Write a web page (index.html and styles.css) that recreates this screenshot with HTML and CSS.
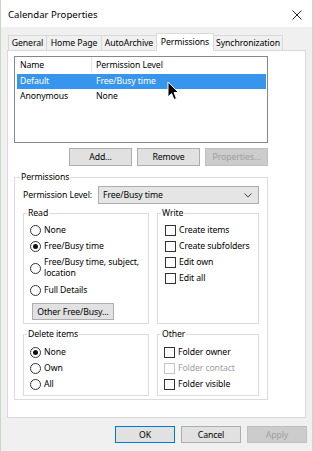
FILE: index.html
```html
<!DOCTYPE html>
<html lang="en">
<head>
    <meta charset="UTF-8">
    <meta name="viewport" content="width=device-width, initial-scale=1.0">
    <title>Calendar Properties</title>
    <link rel="stylesheet" href="styles.css">
</head>
<body>
    <div class="window">
        <div class="titlebar">
            <span class="title">Calendar Properties</span>
            <svg class="close" width="10" height="10" viewBox="0 0 10 10">
                <path d="M0.5 0.5 L9.5 9.5 M9.5 0.5 L0.5 9.5" stroke="#222" stroke-width="1"/>
            </svg>
        </div>

        <div class="tabs">
            <div class="tab tab-general">General</div>
            <div class="tab tab-home">Home Page</div>
            <div class="tab tab-archive">AutoArchive</div>
            <div class="tab tab-perm active">Permissions</div>
            <div class="tab tab-sync">Synchronization</div>
        </div>

        <div class="panel">
            <div class="listbox">
                <div class="list-head">
                    <div class="col-name">Name</div>
                    <div class="col-level">Permission Level</div>
                </div>
                <div class="list-row selected">
                    <div class="col-name">Default</div>
                    <div class="col-level">Free/Busy time</div>
                </div>
                <div class="list-row">
                    <div class="col-name">Anonymous</div>
                    <div class="col-level">None</div>
                </div>
                <svg class="cursor" width="13" height="20" viewBox="0 0 13 20">
                    <path d="M1 1 L1 16 L4.5 12.5 L7 18.5 L9.5 17.5 L7 11.5 L11.5 11.5 Z" fill="#000" stroke="#fff" stroke-width="1"/>
                </svg>
            </div>

            <div class="list-buttons">
                <button class="btn">Add...</button>
                <button class="btn">Remove</button>
                <button class="btn disabled">Properties...</button>
            </div>

            <fieldset class="group outer">
                <legend>Permissions</legend>
                <div class="level-row">
                    <span class="level-label">Permission Level:</span>
                    <div class="select">
                        <span>Free/Busy time</span>
                        <svg width="8" height="5" viewBox="0 0 8 5">
                            <path d="M0.5 0.5 L4 4 L7.5 0.5" fill="none" stroke="#444" stroke-width="1"/>
                        </svg>
                    </div>
                </div>

                <div class="group-grid">
                    <fieldset class="group read">
                        <legend>Read</legend>
                        <div class="opt"><span class="radio"></span>None</div>
                        <div class="opt"><span class="radio checked"></span>Free/Busy time</div>
                        <div class="opt multi"><span class="radio"></span><span>Free/Busy time, subject,<br>location</span></div>
                        <div class="opt"><span class="radio"></span>Full Details</div>
                        <button class="btn other">Other Free/Busy...</button>
                    </fieldset>

                    <fieldset class="group write">
                        <legend>Write</legend>
                        <div class="opt"><span class="check"></span>Create items</div>
                        <div class="opt"><span class="check"></span>Create subfolders</div>
                        <div class="opt"><span class="check"></span>Edit own</div>
                        <div class="opt"><span class="check"></span>Edit all</div>
                    </fieldset>

                    <fieldset class="group lower">
                        <legend>Delete items</legend>
                        <div class="opt"><span class="radio checked"></span>None</div>
                        <div class="opt"><span class="radio"></span>Own</div>
                        <div class="opt"><span class="radio"></span>All</div>
                    </fieldset>

                    <fieldset class="group lower">
                        <legend>Other</legend>
                        <div class="opt"><span class="check"></span>Folder owner</div>
                        <div class="opt off"><span class="check"></span>Folder contact</div>
                        <div class="opt"><span class="check"></span>Folder visible</div>
                    </fieldset>
                </div>
            </fieldset>
        </div>

        <div class="footer">
            <button class="btn wide default">OK</button>
            <button class="btn wide">Cancel</button>
            <button class="btn wide disabled">Apply</button>
        </div>
    </div>
</body>
</html>
```

FILE: styles.css
```css
body {
    margin: 0;
    background-color: #f0f0f0;
    font-family: "Noto Sans", "Open Sans", sans-serif;
    font-size: 8.7px;
    letter-spacing: -0.1px;
    color: #000;
}
.window {
    width: 313px;
    height: 451px;
    box-sizing: border-box;
    border-left: 1px solid #c6d9c3;
    border-right: 1px solid #c6d9c3;
    background-color: #f0f0f0;
    overflow: hidden;
    white-space: nowrap;
}
.titlebar {
    height: 27px;
    background-color: #fff;
    display: flex;
    align-items: center;
    justify-content: space-between;
    padding: 0 10px 0 7px;
}
.title {
    font-size: 9.6px;
    letter-spacing: 0;
    margin-top: 2px;
}
.close {
    margin-top: 2px;
}

/* tabs */
.tabs {
    display: flex;
    align-items: flex-end;
    height: 23px;
    padding-left: 8px;
}
.tab {
    height: 15px;
    line-height: 15px;
    box-sizing: border-box;
    border: 1px solid #d9d9d9;
    border-bottom: none;
    margin-left: -1px;
    text-align: center;
    background-color: #f0f0f0;
}
.tab.active {
    height: 18px;
    line-height: 16px;
    background-color: #fff;
    margin-bottom: -1px;
    position: relative;
    z-index: 1;
}
.tab-general { width: 39px; }
.tab-home { width: 56px; }
.tab-archive { width: 56px; }
.tab-perm { width: 58px; }
.tab-sync { width: 70px; }

.panel {
    margin: 0 6px;
    height: 368px;
    box-sizing: border-box;
    border: 1px solid #d9d9d9;
    background-color: #fff;
    padding: 5px 37px 0 6px;
}

/* list */
.listbox {
    height: 87px;
    box-sizing: border-box;
    border: 1px solid #828790;
    position: relative;
}
.list-head {
    display: flex;
    height: 16px;
    line-height: 16px;
    margin-bottom: 1px;
}
.list-head .col-name {
    border-right: 1px solid #e5e5e5;
}
.col-name {
    width: 71px;
    padding-left: 5px;
}
.col-level {
    padding-left: 4px;
}
.list-row {
    display: flex;
    height: 15px;
    line-height: 15px;
    margin: 0 1px 0 2px;
}
.list-row .col-name {
    width: 71px;
    padding-left: 3px;
}
.list-row .col-level {
    padding-left: 5px;
}
.list-row.selected {
    background-color: #3795ee;
    color: #fff;
}
.cursor {
    position: absolute;
    left: 152px;
    top: 24px;
}

.list-buttons {
    display: flex;
    justify-content: flex-end;
    gap: 5px;
    margin-top: 5px;
}
.btn {
    font-family: inherit;
    font-size: inherit;
    letter-spacing: inherit;
    height: 18px;
    width: 63px;
    box-sizing: border-box;
    border: 1px solid #adadad;
    background-color: #e1e1e1;
    color: #000;
    padding: 0;
    white-space: nowrap;
}
.btn.disabled {
    background-color: #cccccc;
    border-color: #bfbfbf;
    color: #a0a0a0;
}
.btn.default {
    border-color: #0078d7;
}

/* group boxes */
.group {
    margin: 0;
    border: 1px solid #dcdcdc;
    min-width: 0;
}
.group legend {
    padding: 0 1px;
    line-height: 12px;
    margin-left: -3px;
}
.outer {
    margin-top: 5px;
    padding: 0 8px 3px 8px;
}
.level-row {
    display: flex;
    align-items: center;
    margin-top: 3px;
}
.level-label {
    width: 75px;
    flex-shrink: 0;
}
.select {
    flex: 1;
    height: 18px;
    box-sizing: border-box;
    border: 1px solid #adadad;
    background-color: #e5e5e5;
    display: flex;
    align-items: center;
    justify-content: space-between;
    padding: 0 6px 0 4px;
}
.group-grid {
    display: grid;
    grid-template-columns: 126px 102px;
    column-gap: 8px;
    row-gap: 4px;
    margin-top: 3px;
}
.read, .write {
    padding: 3px 6px 3px 6px;
}
.lower {
    padding: 4px 6px 3px 6px;
}
.opt {
    display: flex;
    align-items: center;
    height: 16px;
}
.opt.multi {
    height: 28px;
    line-height: 11.5px;
}
.opt.off {
    color: #a0a0a0;
}
.radio {
    width: 11px;
    height: 11px;
    box-sizing: border-box;
    border: 1px solid #333;
    border-radius: 50%;
    margin-right: 3px;
    flex-shrink: 0;
    display: flex;
    align-items: center;
    justify-content: center;
}
.radio.checked::after {
    content: "";
    width: 5px;
    height: 5px;
    border-radius: 50%;
    background-color: #111;
}
.check {
    width: 11px;
    height: 11px;
    box-sizing: border-box;
    border: 1px solid #333;
    margin-right: 3px;
    flex-shrink: 0;
}
.off .check {
    border-color: #c4c4c4;
}
.write .check {
    margin-left: 1px;
}
.btn.other {
    width: 82px;
    margin: 5px 0 0 2px;
    height: 17px;
}

.footer {
    display: flex;
    justify-content: flex-end;
    gap: 6px;
    padding: 8px 5px 0 0;
}
.btn.wide {
    width: 60px;
    height: 17px;
}
```
